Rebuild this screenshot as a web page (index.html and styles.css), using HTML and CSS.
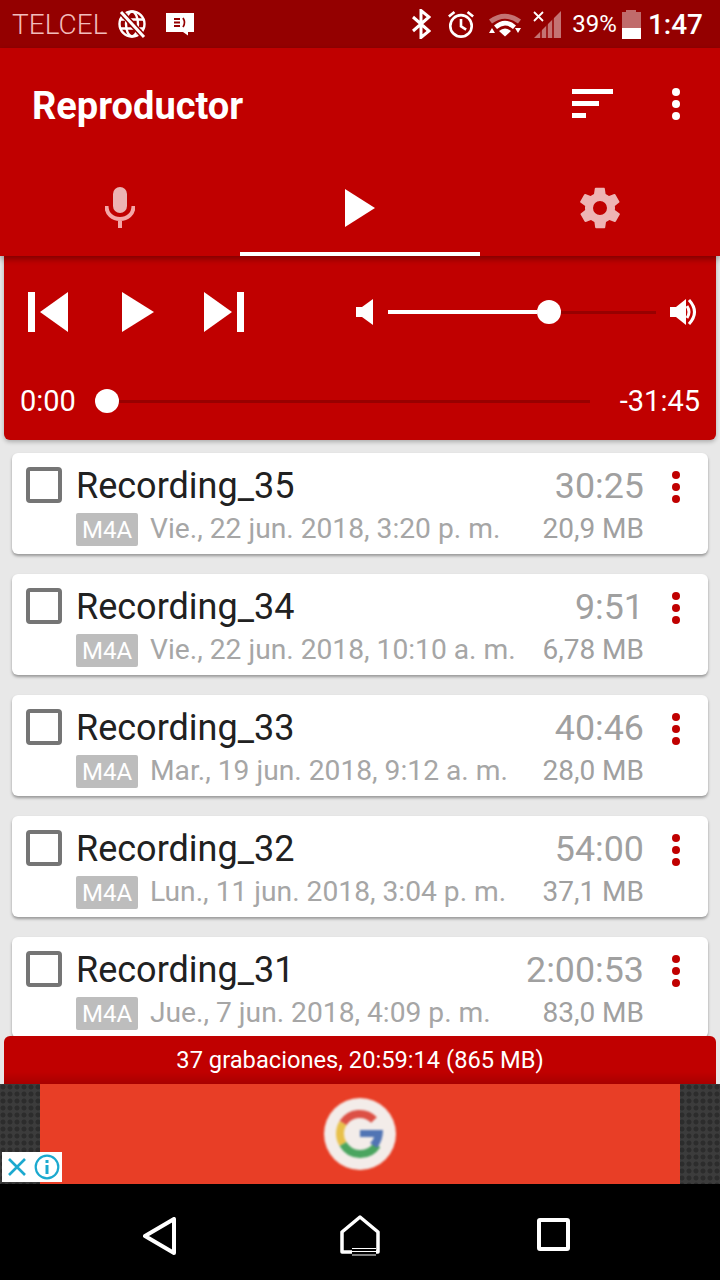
FILE: index.html
```html
<!DOCTYPE html>
<html lang="es">
<head>
    <meta charset="UTF-8">
    <meta name="viewport" content="width=device-width, initial-scale=1.0">
    <title>Reproductor</title>
    <link rel="stylesheet" href="styles.css">
</head>
<body>
    <div class="status-bar">
        <span class="carrier">TELCEL</span>
        <svg class="st-globe" width="30" height="30" viewBox="0 0 30 30" fill="none" stroke="#fff" stroke-width="2.4">
            <circle cx="15" cy="15" r="12.5"/>
            <ellipse cx="15" cy="15" rx="6" ry="12.5"/>
            <path d="M3 10.5h24M3 19.5h24"/>
            <path d="M4 3l23 25" stroke="#940000" stroke-width="6"/>
            <path d="M4 3l23 25" stroke-width="3"/>
        </svg>
        <svg class="st-msg" width="28" height="24" viewBox="0 0 28 24">
            <path d="M0 1h28v19h-6v3.500l-5-3.500H0z" fill="#fff"/>
            <path d="M8 7h6M8 10.500h6M8 14h6M17 6q3 4.500 0 9" fill="none" stroke="#940000" stroke-width="1.800"/>
        </svg>
        <span class="status-space"></span>
        <svg class="st-bt" width="20" height="30" viewBox="0 0 20 30" fill="none" stroke="#fff" stroke-width="3">
            <path d="M2 8l16 14-8 6.500V1.500l8 6.500L2 22"/>
        </svg>
        <svg class="st-alarm" width="28" height="29" viewBox="0 0 30 31" fill="none" stroke="#fff" stroke-width="2.800">
            <circle cx="15" cy="17" r="11.500"/>
            <path d="M15 9.500v8l5.500 3.500M2 7l6-5M28 7l-6-5"/>
        </svg>
        <svg class="st-wifi" width="34" height="26" viewBox="0 0 34 26">
            <path d="M1 8.500Q17-3 33 8.500l-3 4Q17 3 4 12.500z" fill="#fff" opacity=".45"/>
            <path d="M6 14.500Q17 5 28 14.500l-3 3.500Q17 11 9 18z" fill="#fff"/>
            <path d="M11 20q6-5 12 0l-6 5.500z" fill="#fff"/>
            <path d="M1 22l3-5 3 5zM27 17h6l-3 5z" fill="#fff"/>
        </svg>
        <svg class="st-signal" width="30" height="30" viewBox="0 0 30 30">
            <path d="M1 29L28 2v27z" fill="#fff" opacity=".45"/>
            <path d="M8 29V21M14 29V15M20 29V9" stroke="#940000" stroke-width="1.500"/>
            <path d="M1 3l9 9M10 3l-9 9" stroke="#fff" stroke-width="1.800"/>
        </svg>
        <span class="battery-pct">39%</span>
        <div class="battery">
            <div class="battery-nub"></div>
            <div class="battery-body"><div class="battery-level"></div></div>
        </div>
        <span class="clock">1:47</span>
    </div>

    <header class="app-bar">
        <div class="toolbar">
            <h1>Reproductor</h1>
            <svg class="sort-icon" width="42" height="30" viewBox="0 0 42 30" fill="#fff">
                <rect x="0" y="0" width="41" height="5"/>
                <rect x="0" y="12" width="27" height="5"/>
                <rect x="0" y="24" width="14" height="5"/>
            </svg>
            <div class="dots white"><i></i><i></i><i></i></div>
        </div>
        <nav class="tabs">
            <div class="tab dim">
                <svg width="30" height="42" viewBox="0 0 30 42">
                    <rect x="8" y="0" width="14" height="26" rx="7" fill="#fff" opacity=".7"/>
                    <path d="M1.500 19c0 8 6 13 13.500 13s13.500-5 13.500-13M15 32v9" fill="none" stroke="#f4a6a6" stroke-width="4"/>
                </svg>
            </div>
            <div class="tab active">
                <svg width="32" height="38" viewBox="0 0 32 38" fill="#fff"><path d="M1 0l30 19L1 38z"/></svg>
            </div>
            <div class="tab dim">
                <svg width="48" height="48" viewBox="0 0 24 24" fill="#eeb4b4">
                    <path d="M19.400 13c.1-.3.100-.7.100-1s0-.7-.1-1l2.200-1.700c.2-.2.200-.4.100-.6l-2-3.500c-.1-.2-.4-.3-.6-.2l-2.600 1c-.5-.4-1.100-.7-1.700-1l-.4-2.700c0-.2-.2-.4-.5-.4h-4c-.3 0-.5.200-.5.400l-.4 2.700c-.6.300-1.200.6-1.700 1l-2.600-1c-.2-.1-.5 0-.6.200l-2 3.500c-.1.200-.1.400.1.600L4.600 11c-.1.300-.1.700-.1 1s0 .7.100 1l-2.200 1.700c-.2.200-.2.400-.1.600l2 3.500c.1.200.4.300.6.200l2.600-1c.5.400 1.100.7 1.700 1l.4 2.700c0 .2.200.4.500.4h4c.3 0 .5-.2.500-.4l.4-2.700c.6-.3 1.200-.6 1.700-1l2.600 1c.2.100.5 0 .6-.2l2-3.500c.1-.2.100-.4-.1-.6zM12 15.500a3.500 3.500 0 1 1 0-7 3.500 3.500 0 0 1 0 7z"/>
                </svg>
            </div>
        </nav>
    </header>

    <section class="player">
        <div class="controls">
            <svg class="btn-prev" width="40" height="40" viewBox="0 0 40 40" fill="#fff"><rect width="7" height="40"/><path d="M40 0v40L12 20z"/></svg>
            <svg class="btn-play" width="32" height="40" viewBox="0 0 32 40" fill="#fff"><path d="M0 0l32 20L0 40z"/></svg>
            <svg class="btn-next" width="40" height="40" viewBox="0 0 40 40" fill="#fff"><path d="M0 0v40l28-20z"/><rect x="33" width="7" height="40"/></svg>
            <svg class="vol-low" width="17" height="26" viewBox="0 0 17 26" fill="#fff"><path d="M0 8h6l11-8v26L6 18H0z"/></svg>
            <div class="slider vol-slider">
                <div class="fill" style="width: 149px"></div>
                <div class="thumb"></div>
                <div class="rest"></div>
            </div>
            <svg class="vol-high" width="28" height="26" viewBox="0 0 28 26">
                <path d="M0 8h6l10-8v26L6 18H0z" fill="#fff"/>
                <path d="M17 7q4 6 0 12M19 1q11 12 0 24" fill="none" stroke="#fff" stroke-width="3"/>
            </svg>
        </div>
        <div class="seek">
            <span class="seek-time">0:00</span>
            <div class="slider seek-slider">
                <div class="thumb"></div>
                <div class="rest"></div>
            </div>
            <span class="seek-time">-31:45</span>
        </div>
    </section>

    <main class="list">
        <article class="card">
            <span class="check"></span>
            <div class="info">
                <div class="row"><span class="name">Recording_35</span><span class="duration">30:25</span></div>
                <div class="row"><span class="badge">M4A</span><span class="date">Vie., 22 jun. 2018, 3:20 p. m.</span><span class="size">20,9 MB</span></div>
            </div>
            <div class="dots red"><i></i><i></i><i></i></div>
        </article>
        <article class="card">
            <span class="check"></span>
            <div class="info">
                <div class="row"><span class="name">Recording_34</span><span class="duration">9:51</span></div>
                <div class="row"><span class="badge">M4A</span><span class="date">Vie., 22 jun. 2018, 10:10 a. m.</span><span class="size">6,78 MB</span></div>
            </div>
            <div class="dots red"><i></i><i></i><i></i></div>
        </article>
        <article class="card">
            <span class="check"></span>
            <div class="info">
                <div class="row"><span class="name">Recording_33</span><span class="duration">40:46</span></div>
                <div class="row"><span class="badge">M4A</span><span class="date">Mar., 19 jun. 2018, 9:12 a. m.</span><span class="size">28,0 MB</span></div>
            </div>
            <div class="dots red"><i></i><i></i><i></i></div>
        </article>
        <article class="card">
            <span class="check"></span>
            <div class="info">
                <div class="row"><span class="name">Recording_32</span><span class="duration">54:00</span></div>
                <div class="row"><span class="badge">M4A</span><span class="date">Lun., 11 jun. 2018, 3:04 p. m.</span><span class="size">37,1 MB</span></div>
            </div>
            <div class="dots red"><i></i><i></i><i></i></div>
        </article>
        <article class="card">
            <span class="check"></span>
            <div class="info">
                <div class="row"><span class="name">Recording_31</span><span class="duration">2:00:53</span></div>
                <div class="row"><span class="badge">M4A</span><span class="date">Jue., 7 jun. 2018, 4:09 p. m.</span><span class="size">83,0 MB</span></div>
            </div>
            <div class="dots red"><i></i><i></i><i></i></div>
        </article>
    </main>

    <div class="summary">37 grabaciones, 20:59:14 (865 MB)</div>

    <aside class="ad">
        <div class="ad-banner">
            <svg class="ad-logo" width="74" height="74" viewBox="0 0 74 74" fill="none">
                <circle cx="37" cy="37" r="36" fill="#f3ece9"/>
                <path d="M20 26A20 20 0 0 1 51 23" stroke="#dc5045" stroke-width="8"/>
                <path d="M20 26a20 20 0 0 0 0 21" stroke="#e8c04a" stroke-width="8"/>
                <path d="M20 47a20 20 0 0 0 34 1" stroke="#4aa55f" stroke-width="8"/>
                <path d="M37 33h23c0 7-2 13-6 18l-7-5c2-2 3-3 4-6H37z" fill="#5174b4"/>
            </svg>
        </div>
        <div class="ad-choices">
            <svg width="24" height="24" viewBox="0 0 24 24" stroke="#1ba9cf" stroke-width="2.600"><path d="M4 4l16 16M20 4L4 20"/></svg>
            <svg width="26" height="26" viewBox="0 0 26 26" fill="none" stroke="#1ba9cf" stroke-width="2.200">
                <circle cx="13" cy="13" r="11.300"/>
                <path d="M13 11v9M13 6v3" stroke-width="3"/>
            </svg>
        </div>
    </aside>

    <footer class="nav-bar">
        <svg class="nav-back" width="34" height="38" viewBox="0 0 34 38" fill="none" stroke="#fff" stroke-width="4" stroke-linejoin="round"><path d="M31 2v34L2 19z"/></svg>
        <svg class="nav-home" width="40" height="48" viewBox="0 0 40 48" fill="none" stroke="#fff" stroke-linejoin="round">
            <path d="M12 44H2V24L20 9l18 15v20h-2" stroke-width="3.500"/>
            <path d="M12 40.500h24M12 43.500h24M12 47h24" stroke-width="1"/>
        </svg>
        <span class="recents"></span>
    </footer>
</body>
</html>
```

FILE: styles.css
```css
* {
    box-sizing: border-box;
}

html,
body {
    height: 100%;
}

body {
    margin: 0;
    height: 1280px;
    overflow: hidden;
    display: flex;
    flex-direction: column;
    font-family: 'Roboto', sans-serif;
    background-color: #e8e8e8;
}

/* status bar */

.status-bar {
    height: 48px;
    flex: none;
    display: flex;
    align-items: center;
    padding: 0 17px 0 12px;
    background-color: #940000;
    color: #fff;
}

.carrier {
    font-size: 28px;
    font-weight: 300;
    color: #f2bcbc;
}

.st-globe {
    margin-left: 10px;
}

.st-msg {
    margin-left: 19px;
}

.status-space {
    flex: 1;
}

.st-bt {
    margin-right: 16px;
}

.st-alarm {
    margin-right: 13px;
}

.st-wifi {
    margin-right: 11px;
}

.st-signal {
    margin-right: 9px;
}

.battery-pct {
    font-size: 24px;
    margin-right: 5px;
}

.battery {
    display: flex;
    flex-direction: column;
    align-items: center;
    width: 19px;
    margin: 1px 7px 0 0;
}

.battery-nub {
    width: 10px;
    height: 2px;
    background-color: #c06b6b;
}

.battery-body {
    width: 100%;
    height: 27px;
    display: flex;
    align-items: flex-end;
    background-color: #c06b6b;
}

.battery-level {
    width: 100%;
    height: 11px;
    background-color: #fff;
}

.clock {
    font-size: 28px;
    font-weight: 500;
}

/* app bar */

.app-bar {
    position: relative;
    z-index: 2;
    flex: none;
    height: 208px;
    background-color: #c00000;
    box-shadow: 0 3px 6px rgba(0, 0, 0, 0.35);
}

.toolbar {
    height: 112px;
    display: flex;
    align-items: center;
    padding: 0 40px 0 32px;
    color: #fff;
}

.toolbar h1 {
    flex: 1;
    margin: 3px 0 0;
    font-size: 38px;
    font-weight: 700;
}

.sort-icon {
    margin-right: 58px;
}

.dots {
    display: flex;
    flex-direction: column;
    gap: 4px;
}

.dots i {
    display: block;
    border-radius: 50%;
}

.dots.white i {
    width: 8px;
    height: 8px;
    background-color: #fff;
}

.dots.red i {
    width: 8px;
    height: 8px;
    background-color: #c00000;
}

.tabs {
    height: 96px;
    display: grid;
    grid-template-columns: repeat(3, 1fr);
}

.tab {
    display: flex;
    align-items: center;
    justify-content: center;
    padding-top: 4px;
    border-bottom: 4px solid transparent;
}

.tab.active {
    border-bottom-color: #fff;
}

/* player card */

.player {
    flex: none;
    height: 184px;
    margin: 0 4px;
    padding: 36px 16px 0 16px;
    background-color: #c00000;
    border-radius: 0 0 6px 6px;
    color: #fff;
    box-shadow: 0 2px 4px rgba(0, 0, 0, 0.25);
}

.controls {
    display: flex;
    align-items: center;
    height: 40px;
    padding: 0 0 0 8px;
}

.btn-play {
    margin-left: 54px;
}

.btn-next {
    margin-left: 50px;
}

.vol-low {
    margin-left: 112px;
}

.slider {
    display: flex;
    align-items: center;
}

.vol-slider {
    width: 268px;
    margin: 0 14px 0 15px;
}

.fill {
    height: 4px;
    background-color: #fff;
}

.thumb {
    width: 24px;
    height: 24px;
    flex: none;
    border-radius: 50%;
    background-color: #fff;
}

.rest {
    flex: 1;
    height: 3px;
    background-color: #980000;
}

.seek {
    display: flex;
    align-items: center;
    margin-top: 50px;
    height: 38px;
}

.seek-time {
    font-size: 29px;
    font-weight: 400;
}

.seek-slider {
    flex: 1;
    margin: 0 30px 0 19px;
}

/* recordings */

.list {
    flex: 1;
    min-height: 0;
    overflow: hidden;
    display: flex;
    flex-direction: column;
    gap: 20px;
    padding: 13px 12px 0;
}

.card {
    flex: none;
    height: 101px;
    display: flex;
    background-color: #fff;
    border-radius: 6px;
    box-shadow: 0 2px 3px rgba(0, 0, 0, 0.35);
    padding: 6px 0 0 14px;
}

.check {
    width: 36px;
    height: 36px;
    flex: none;
    margin-top: 8px;
    border: 4px solid #757575;
    border-radius: 4px;
}

.info {
    flex: 1;
    min-width: 0;
    margin-left: 14px;
}

.row {
    display: flex;
    align-items: center;
    justify-content: space-between;
    height: 53px;
}

.row + .row {
    height: 34px;
    margin-top: 0;
}

.name {
    font-size: 36px;
    color: #212121;
}

.duration {
    font-size: 35.8px;
    color: #a0a0a0;
}

.badge {
    width: 62px;
    height: 33px;
    flex: none;
    text-align: center;
    line-height: 34px;
    font-size: 24px;
    color: #fff;
    background-color: #bdbdbd;
    border-radius: 2px;
}

.date {
    flex: 1;
    margin-left: 12px;
    padding-bottom: 2px;
    font-size: 28.2px;
    color: #a6a6a6;
    white-space: nowrap;
}

.size {
    padding-bottom: 2px;
    font-size: 28px;
    color: #a0a0a0;
}

.card .dots {
    flex: none;
    width: 64px;
    align-items: center;
    padding-top: 12px;
}

/* footer summary */

.summary {
    position: relative;
    z-index: 1;
    flex: none;
    height: 48px;
    margin: 0 4px;
    display: flex;
    align-items: center;
    justify-content: center;
    font-size: 23.7px;
    color: #fff;
    border-radius: 6px 6px 0 0;
    background: linear-gradient(#c00000 75%, #a80000);
}

/* ad */

.ad {
    position: relative;
    flex: none;
    height: 100px;
    padding: 0 40px;
    background-color: #3c3c3c;
    background-image: radial-gradient(circle at 3px 3px, #2c2c2c 2px, transparent 3px);
    background-size: 7px 7px;
}

.ad-banner {
    height: 100%;
    display: flex;
    align-items: center;
    justify-content: center;
    background-color: #e83e26;
}

.ad-logo {
    filter: blur(0.8px);
}

.ad-choices {
    position: absolute;
    left: 2px;
    bottom: 2px;
    width: 60px;
    height: 30px;
    display: flex;
    align-items: center;
    justify-content: center;
    gap: 5px;
    background-color: #fff;
}

/* android nav */

.nav-bar {
    flex: none;
    height: 96px;
    background-color: #000;
    display: grid;
    grid-template-columns: 320px 80px 306px;
    align-items: center;
    justify-items: center;
}

.nav-back {
    margin-top: 7px;
}

.recents {
    width: 33px;
    height: 33px;
    margin-top: 5px;
    border: 4px solid #fff;
    border-radius: 3px;
}
```
